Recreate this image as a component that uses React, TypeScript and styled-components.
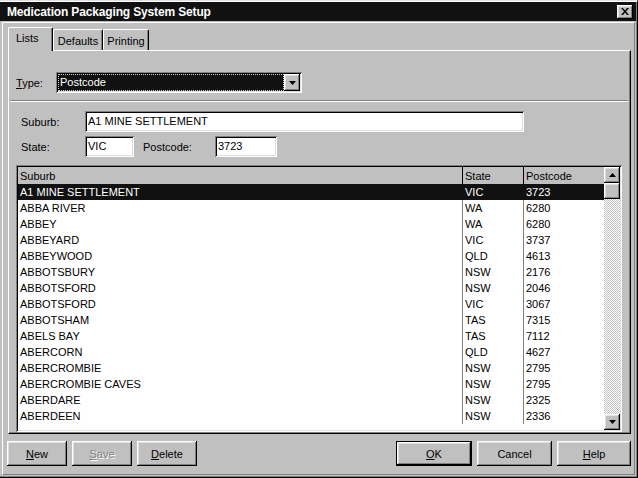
import React from 'react';
import styled, { createGlobalStyle, css } from 'styled-components';

const GlobalStyle = createGlobalStyle`
  html, body {
    margin: 0;
    padding: 0;
    background: #c0c0c0;
  }
  * {
    box-sizing: border-box;
  }
`;

const GRAY = '#c0c0c0';
const DARK = '#808080';
const BLACK = '#000';
const WHITE = '#fff';
const FONT = `"Liberation Sans", Arial, sans-serif`;
const TEXT = '11px';

const raised = css`
  box-shadow: inset -1px -1px ${BLACK}, inset 1px 1px ${WHITE}, inset -2px -2px ${DARK}, inset 2px 2px #dfdfdf;
`;

const sunken = css`
  box-shadow: inset 1px 1px ${DARK}, inset -1px -1px ${WHITE}, inset 2px 2px ${BLACK}, inset -2px -2px #dfdfdf;
`;

const Window = styled.div`
  width: 638px;
  height: 478px;
  background: ${GRAY};
  border-top: 1px solid #dfdfdf;
  border-right: 1px solid ${BLACK};
  border-bottom: 1px solid ${BLACK};
  box-shadow: inset 0 1px ${WHITE}, inset -1px -1px ${DARK};
  padding: 1px 1px 1px 0;
  display: flex;
  flex-direction: column;
  font-family: ${FONT};
  font-size: ${TEXT};
  color: ${BLACK};
  overflow: hidden;
`;

const TitleBar = styled.div`
  height: 19px;
  background: #111;
  display: flex;
  align-items: center;
  justify-content: space-between;
  padding: 0 3px 0 7px;
  color: ${WHITE};
  font-weight: bold;
  font-size: 12px;
  letter-spacing: -0.15px;
`;

const CloseButton = styled.div`
  width: 16px;
  height: 14px;
  background: ${GRAY};
  ${raised};
  display: flex;
  align-items: center;
  justify-content: center;
`;

const Frame = styled.div`
  flex: 1;
  margin: 1px 1px 1px 2px;
  border-top: 1px solid ${WHITE};
  border-left: 1px solid ${WHITE};
  border-right: 1px solid ${DARK};
  border-bottom: 1px solid ${DARK};
  padding: 4px 3px 0 4px;
  display: flex;
  flex-direction: column;
`;

const TabStrip = styled.div`
  display: flex;
  align-items: flex-end;
  height: 23px;
  margin-left: 1px;
  position: relative;
  z-index: 1;
`;

const Tab = styled.div<{ $active?: boolean; $width: number }>`
  width: ${(p) => p.$width}px;
  height: ${(p) => (p.$active ? '24px' : '21px')};
  margin-bottom: ${(p) => (p.$active ? '-1px' : '0')};
  padding-top: ${(p) => (p.$active ? '4px' : '5px')};
  padding-left: ${(p) => (p.$active ? '7px' : '0')};
  text-align: ${(p) => (p.$active ? 'left' : 'center')};
  background: ${GRAY};
  border-top: 1px solid ${WHITE};
  border-left: 1px solid ${WHITE};
  border-right: 1px solid ${BLACK};
  border-top-left-radius: 2px;
  border-top-right-radius: 2px;
  box-shadow: inset -1px 0 ${DARK};
  font-size: ${TEXT};
  line-height: 13px;
`;

const TabPanel = styled.div`
  margin-left: 1px;
  width: 623px;
  height: 384px;
  border-top: 1px solid ${WHITE};
  border-left: 1px solid ${WHITE};
  border-right: 1px solid ${BLACK};
  border-bottom: 1px solid ${BLACK};
  box-shadow: inset -1px -1px ${DARK};
  display: flex;
  flex-direction: column;
  padding: 0 0 1px 0;
`;

const TypeRow = styled.div`
  display: flex;
  align-items: center;
  margin: 21px 0 0 7px;
  height: 21px;
`;

const Label = styled.span<{ $width?: number }>`
  display: inline-block;
  width: ${(p) => (p.$width ? `${p.$width}px` : 'auto')};
  font-size: ${TEXT};
`;

const U = styled.span`
  text-decoration: underline;
`;

const Combo = styled.div`
  width: 246px;
  height: 21px;
  background: ${WHITE};
  ${sunken};
  padding: 2px;
  display: flex;
  align-items: stretch;
`;

const ComboValue = styled.div`
  flex: 1;
  background: #111;
  color: ${WHITE};
  outline: 1px dotted #ccc;
  outline-offset: -1px;
  padding: 2px 2px 0 2px;
  font-size: ${TEXT};
  line-height: 13px;
`;

const ComboButton = styled.div`
  width: 16px;
  background: ${GRAY};
  ${raised};
  display: flex;
  align-items: center;
  justify-content: center;
`;

const Separator = styled.div`
  margin: 7px 2px 0 1px;
  height: 2px;
  border-top: 1px solid ${DARK};
  border-bottom: 1px solid ${WHITE};
`;

const FieldRow = styled.div<{ $top: number }>`
  display: flex;
  align-items: center;
  margin: ${(p) => p.$top}px 0 0 12px;
  height: 21px;
`;

const Input = styled.div<{ $width: number }>`
  width: ${(p) => p.$width}px;
  height: 21px;
  background: ${WHITE};
  ${sunken};
  padding: 4px 3px 0 3px;
  font-size: ${TEXT};
  line-height: 13px;
  white-space: nowrap;
  overflow: hidden;
`;

const ListBox = styled.div`
  margin: 8px 0 0 7px;
  width: 606px;
  height: 268px;
  background: ${WHITE};
  ${sunken};
  padding: 2px;
  display: flex;
`;

const ListMain = styled.div`
  flex: 1;
  display: flex;
  flex-direction: column;
  overflow: hidden;
`;

const gridCols = css`
  display: grid;
  grid-template-columns: 444px 61px 1fr;
`;

const HeaderRow = styled.div`
  ${gridCols};
  height: 17px;
  background: ${GRAY};
`;

const HeaderCell = styled.div<{ $first?: boolean }>`
  padding: 2px 2px 0 2px;
  border-left: ${(p) => (p.$first ? 'none' : `1px solid ${BLACK}`)};
  font-size: ${TEXT};
  line-height: 14px;
`;

const Row = styled.div<{ $selected?: boolean }>`
  ${gridCols};
  height: 16px;
  background: ${(p) => (p.$selected ? '#111' : WHITE)};
  color: ${(p) => (p.$selected ? WHITE : BLACK)};
`;

const Cell = styled.div<{ $first?: boolean; $selected?: boolean }>`
  padding: 0 2px;
  border-left: ${(p) => (p.$first ? 'none' : `1px solid ${p.$selected ? '#111' : DARK}`)};
  font-size: ${TEXT};
  line-height: 16px;
  white-space: nowrap;
`;

const ScrollBar = styled.div`
  width: 16px;
  display: flex;
  flex-direction: column;
  background: repeating-conic-gradient(${GRAY} 0 25%, ${WHITE} 0 50%) 0 0 / 2px 2px;
`;

const ScrollButton = styled.div`
  width: 16px;
  height: 16px;
  background: ${GRAY};
  ${raised};
  display: flex;
  align-items: center;
  justify-content: center;
`;

const Track = styled.div`
  flex: 1;
`;

const ButtonRow = styled.div`
  display: flex;
  align-items: center;
  margin-top: 7px;
  gap: 5px;
  height: 25px;
`;

const Spacer = styled.div`
  flex: 1;
`;

const Button = styled.div<{ $width: number; $default?: boolean; $disabled?: boolean }>`
  width: ${(p) => p.$width}px;
  height: 25px;
  background: ${GRAY};
  ${raised};
  display: flex;
  align-items: center;
  justify-content: center;
  font-size: ${TEXT};
  color: ${(p) => (p.$disabled ? DARK : BLACK)};
  text-shadow: ${(p) => (p.$disabled ? `1px 1px ${WHITE}` : 'none')};
  ${(p) =>
    p.$default &&
    css`
      border: 1px solid ${BLACK};
    `}
`;

const Arrow = ({ up }: { up?: boolean }) => (
  <svg width="7" height="4" viewBox="0 0 7 4">
    <path d={up ? 'M3.5 0 L7 4 L0 4 Z' : 'M0 0 L7 0 L3.5 4 Z'} fill={BLACK} />
  </svg>
);

const rows: [string, string, string][] = [
  ['A1 MINE SETTLEMENT', 'VIC', '3723'],
  ['ABBA RIVER', 'WA', '6280'],
  ['ABBEY', 'WA', '6280'],
  ['ABBEYARD', 'VIC', '3737'],
  ['ABBEYWOOD', 'QLD', '4613'],
  ['ABBOTSBURY', 'NSW', '2176'],
  ['ABBOTSFORD', 'NSW', '2046'],
  ['ABBOTSFORD', 'VIC', '3067'],
  ['ABBOTSHAM', 'TAS', '7315'],
  ['ABELS BAY', 'TAS', '7112'],
  ['ABERCORN', 'QLD', '4627'],
  ['ABERCROMBIE', 'NSW', '2795'],
  ['ABERCROMBIE CAVES', 'NSW', '2795'],
  ['ABERDARE', 'NSW', '2325'],
  ['ABERDEEN', 'NSW', '2336'],
];

const App = (): JSX.Element => {
  return (
    <>
      <GlobalStyle />
      <Window>
        <TitleBar>
          <span>Medication Packaging System Setup</span>
          <CloseButton>
            <svg width="8" height="7" viewBox="0 0 8 7">
              <path d="M0 0 L2 0 L4 2.5 L6 0 L8 0 L5 3.5 L8 7 L6 7 L4 4.5 L2 7 L0 7 L3 3.5 Z" fill={BLACK} />
            </svg>
          </CloseButton>
        </TitleBar>
        <Frame>
          <TabStrip>
            <Tab $active $width={45}>Lists</Tab>
            <Tab $width={50}>Defaults</Tab>
            <Tab $width={46}>Printing</Tab>
          </TabStrip>
          <TabPanel>
            <TypeRow>
              <Label $width={40}><U>T</U>ype:</Label>
              <Combo>
                <ComboValue>Postcode</ComboValue>
                <ComboButton>
                  <Arrow />
                </ComboButton>
              </Combo>
            </TypeRow>
            <Separator />
            <FieldRow $top={9}>
              <Label $width={64}>Suburb:</Label>
              <Input $width={439}>A1 MINE SETTLEMENT</Input>
            </FieldRow>
            <FieldRow $top={4}>
              <Label $width={64}>State:</Label>
              <Input $width={49}>VIC</Input>
              <Label $width={72} style={{ marginLeft: 9 }}>Postcode:</Label>
              <Input $width={62}>3723</Input>
            </FieldRow>
            <ListBox>
              <ListMain>
                <HeaderRow>
                  <HeaderCell $first>Suburb</HeaderCell>
                  <HeaderCell>State</HeaderCell>
                  <HeaderCell>Postcode</HeaderCell>
                </HeaderRow>
                {rows.map(([suburb, state, code], i) => (
                  <Row key={i} $selected={i === 0}>
                    <Cell $first>{suburb}</Cell>
                    <Cell $selected={i === 0}>{state}</Cell>
                    <Cell $selected={i === 0}>{code}</Cell>
                  </Row>
                ))}
              </ListMain>
              <ScrollBar>
                <ScrollButton>
                  <Arrow up />
                </ScrollButton>
                <ScrollButton />
                <Track />
                <ScrollButton>
                  <Arrow />
                </ScrollButton>
              </ScrollBar>
            </ListBox>
          </TabPanel>
          <ButtonRow>
            <Button $width={60}><U>N</U>ew</Button>
            <Button $width={60} $disabled><U>S</U>ave</Button>
            <Button $width={60}><U>D</U>elete</Button>
            <Spacer />
            <Button $width={76} $default><U>O</U>K</Button>
            <Button $width={75}>Cancel</Button>
            <Button $width={74}><U>H</U>elp</Button>
          </ButtonRow>
        </Frame>
      </Window>
    </>
  );
};

export default App;
